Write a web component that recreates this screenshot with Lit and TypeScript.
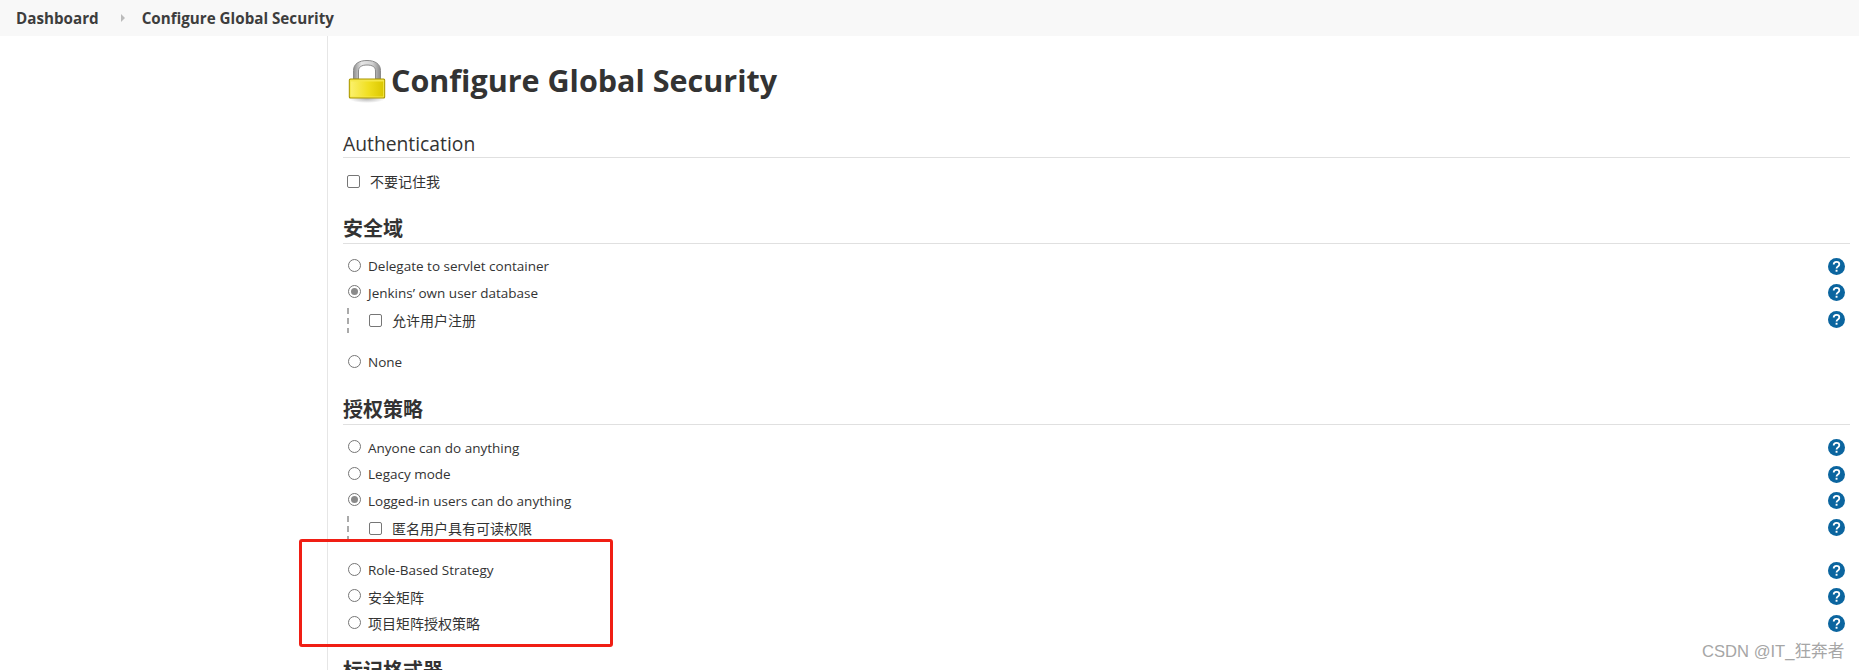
import { LitElement, html, css, nothing } from "lit";
import { customElement } from "lit/decorators.js";

type Row = { label: string; kind: "radio" | "check"; on?: boolean; nested?: boolean; help?: boolean; cjk?: boolean };
type Section = { title: string; cjk?: boolean; rows: Row[] };

const sections: Section[] = [
  { title: "Authentication", rows: [{ label: "不要记住我", kind: "check", cjk: true }] },
  {
    title: "安全域",
    cjk: true,
    rows: [
      { label: "Delegate to servlet container", kind: "radio", help: true },
      { label: "Jenkins’ own user database", kind: "radio", on: true, help: true },
      { label: "允许用户注册", kind: "check", nested: true, help: true, cjk: true },
      { label: "None", kind: "radio" },
    ],
  },
  {
    title: "授权策略",
    cjk: true,
    rows: [
      { label: "Anyone can do anything", kind: "radio", help: true },
      { label: "Legacy mode", kind: "radio", help: true },
      { label: "Logged-in users can do anything", kind: "radio", on: true, help: true },
      { label: "匿名用户具有可读权限", kind: "check", nested: true, help: true, cjk: true },
      { label: "Role-Based Strategy", kind: "radio", help: true },
      { label: "安全矩阵", kind: "radio", help: true, cjk: true },
      { label: "项目矩阵授权策略", kind: "radio", help: true, cjk: true },
    ],
  },
  { title: "标记格式器", cjk: true, rows: [] },
];

const helpIcon = html`<svg class="help" viewBox="0 0 17 17" aria-hidden="true">
  <circle cx="8.5" cy="8.5" r="8.5" fill="#0b659f"></circle>
  <path d="M5.7 6.500c0-1.700 1.200-2.600 2.800-2.600s2.800 .9 2.800 2.300c0 1.100-.6 1.700-1.400 2.200-.9.6-1.300 1-1.300 1.900v.3" fill="none" stroke="#fff" stroke-width="1.800"></path>
  <rect x="7.600" y="11.800" width="1.900" height="1.900" fill="#fff"></rect>
</svg>`;

const lockIcon = html`<svg class="lock" viewBox="0 0 40 44" aria-hidden="true">
  <defs>
    <linearGradient id="body" x1="0" x2="1" y1="0" y2="0">
      <stop offset="0" stop-color="#fbf06a"></stop>
      <stop offset="0.55" stop-color="#f0df20"></stop>
      <stop offset="1" stop-color="#dcc800"></stop>
    </linearGradient>
    <linearGradient id="shackle" x1="0" x2="1" y1="0" y2="0">
      <stop offset="0" stop-color="#8e8e8e"></stop>
      <stop offset="0.3" stop-color="#e6e6e6"></stop>
      <stop offset="0.7" stop-color="#d0d0d0"></stop>
      <stop offset="1" stop-color="#8a8a8a"></stop>
    </linearGradient>
    <radialGradient id="shadow">
      <stop offset="0" stop-color="#999" stop-opacity=".7"></stop>
      <stop offset="1" stop-color="#999" stop-opacity="0"></stop>
    </radialGradient>
  </defs>
  <ellipse cx="20" cy="40" rx="18" ry="4" fill="url(#shadow)"></ellipse>
  <path d="M6.500 20V11.500C6.500 5 12 1.500 20 1.500S33.500 5 33.500 11.500V20h-5V12c0-4-3-6-8.500-6s-8.500 2-8.500 6v8z" fill="url(#shackle)" stroke="#8a8a8a" stroke-width="1"></path>
  <rect x="1.800" y="19.500" width="36.400" height="20" rx="1.500" fill="#a89400"></rect>
  <rect x="2.800" y="20.500" width="34.400" height="18" rx="1" fill="#f5e84a"></rect>
  <rect x="3.800" y="22.500" width="32.400" height="15" fill="url(#body)"></rect>
</svg>`;

@customElement("app-root")
export class AppRoot extends LitElement {
  static styles = css`
    :host {
      display: block;
      height: 670px;
      overflow: hidden;
      position: relative;
      background: #fff;
      color: #333;
      font-family: "Open Sans", "Noto Sans CJK SC", sans-serif;
    }
    .bar {
      height: 36px;
      background: #f8f8f8;
      display: flex;
      align-items: center;
      padding: 0 0 1px 16px;
      box-sizing: border-box;
      font-size: 15.2px;
      font-weight: 700;
      color: #3d3d3d;
    }
    .caret {
      width: 0;
      height: 0;
      margin: 0 17px 0 22px;
      border-left: 4px solid #bbb;
      border-top: 4px solid transparent;
      border-bottom: 4px solid transparent;
    }
    .body {
      display: flex;
      height: 634px;
    }
    .side {
      width: 327px;
      flex: none;
      border-right: 1px solid #e6e6e6;
    }
    .main {
      flex: 1;
      padding: 0 9px 0 15px;
      min-width: 0;
    }
    .title {
      height: 72.500px;
      display: flex;
      align-items: center;
      padding: 15.500px 0 0 4px;
      box-sizing: border-box;
    }
    .lock {
      width: 40px;
      height: 44px;
      flex: none;
      margin-top: 2px;
    }
    h1 {
      margin: 0 0 0 4px;
      font-size: 30.500px;
      font-weight: 700;
      line-height: 40px;
      color: #333;
      white-space: nowrap;
    }
    h2 {
      margin: 0 0 9.500px;
      height: 49.500px;
      box-sizing: border-box;
      border-bottom: 1px solid #e0e0e0;
      display: flex;
      align-items: flex-end;
      font-size: 19.300px;
      font-weight: 500;
      line-height: 26px;
    }
    h2.cjk {
      padding-bottom: 1px;
      font-size: 20px;
      font-weight: 700;
    }
    .row {
      height: 26.500px;
      display: flex;
      align-items: center;
      font-size: 13.500px;
      padding: 0 5.500px 0 5px;
    }
    .row.nested {
      margin: 0.500px 0 16px;
      padding-left: 26px;
      background-image: repeating-linear-gradient(to bottom, #aaa 0 6px, transparent 6px 10px);
      background-size: 2px 27px;
      background-position: 4px 1px;
      background-repeat: no-repeat;
    }
    .label {
      flex: 1;
      white-space: nowrap;
    }
    .label.cjk {
      font-size: 14px;
    }
    .radio {
      width: 13px;
      height: 13px;
      box-sizing: border-box;
      border: 1px solid #767676;
      border-radius: 50%;
      background: #fff;
      margin-right: 7px;
      margin-top: -2px;
      flex: none;
      display: flex;
      align-items: center;
      justify-content: center;
    }
    .radio.on::after {
      content: "";
      width: 7px;
      height: 7px;
      border-radius: 50%;
      background: #8a8a8a;
    }
    .check {
      width: 13px;
      height: 13px;
      box-sizing: border-box;
      border: 1px solid #767676;
      border-radius: 2px;
      background: #fff;
      margin: 1px 10px 0 -1px;
      flex: none;
    }
    .nested .check {
      margin-left: 0;
    }
    .help {
      width: 17px;
      height: 17px;
      flex: none;
    }
    .mark {
      position: absolute;
      left: 299px;
      top: 539px;
      width: 314px;
      height: 108px;
      box-sizing: border-box;
      border: 3px solid #f01e14;
      border-radius: 3px;
      pointer-events: none;
    }
    .wm {
      position: absolute;
      left: 1702px;
      top: 642px;
      font: 16.600px/20px "Liberation Sans", "Noto Sans CJK SC", sans-serif;
      color: #a6a6a6;
      white-space: nowrap;
    }
  `;

  renderRow(r: Row) {
    return html`<div class="row ${r.nested ? "nested" : ""}">
      <span class="${r.kind} ${r.on ? "on" : ""}"></span>
      <span class="label ${r.cjk ? "cjk" : ""}">${r.label}</span>
      ${r.help ? helpIcon : nothing}
    </div>`;
  }

  render() {
    return html`
      <div class="bar">
        <span>Dashboard</span><span class="caret"></span><span>Configure Global Security</span>
      </div>
      <div class="body">
        <div class="side"></div>
        <div class="main">
          <div class="title">${lockIcon}<h1>Configure Global Security</h1></div>
          ${sections.map(
            (s) => html`<h2 class="${s.cjk ? "cjk" : ""}">${s.title}</h2>
              ${s.rows.map((r) => this.renderRow(r))}`
          )}
        </div>
      </div>
      <div class="mark"></div>
      <div class="wm">CSDN @IT_狂奔者</div>
    `;
  }
}
